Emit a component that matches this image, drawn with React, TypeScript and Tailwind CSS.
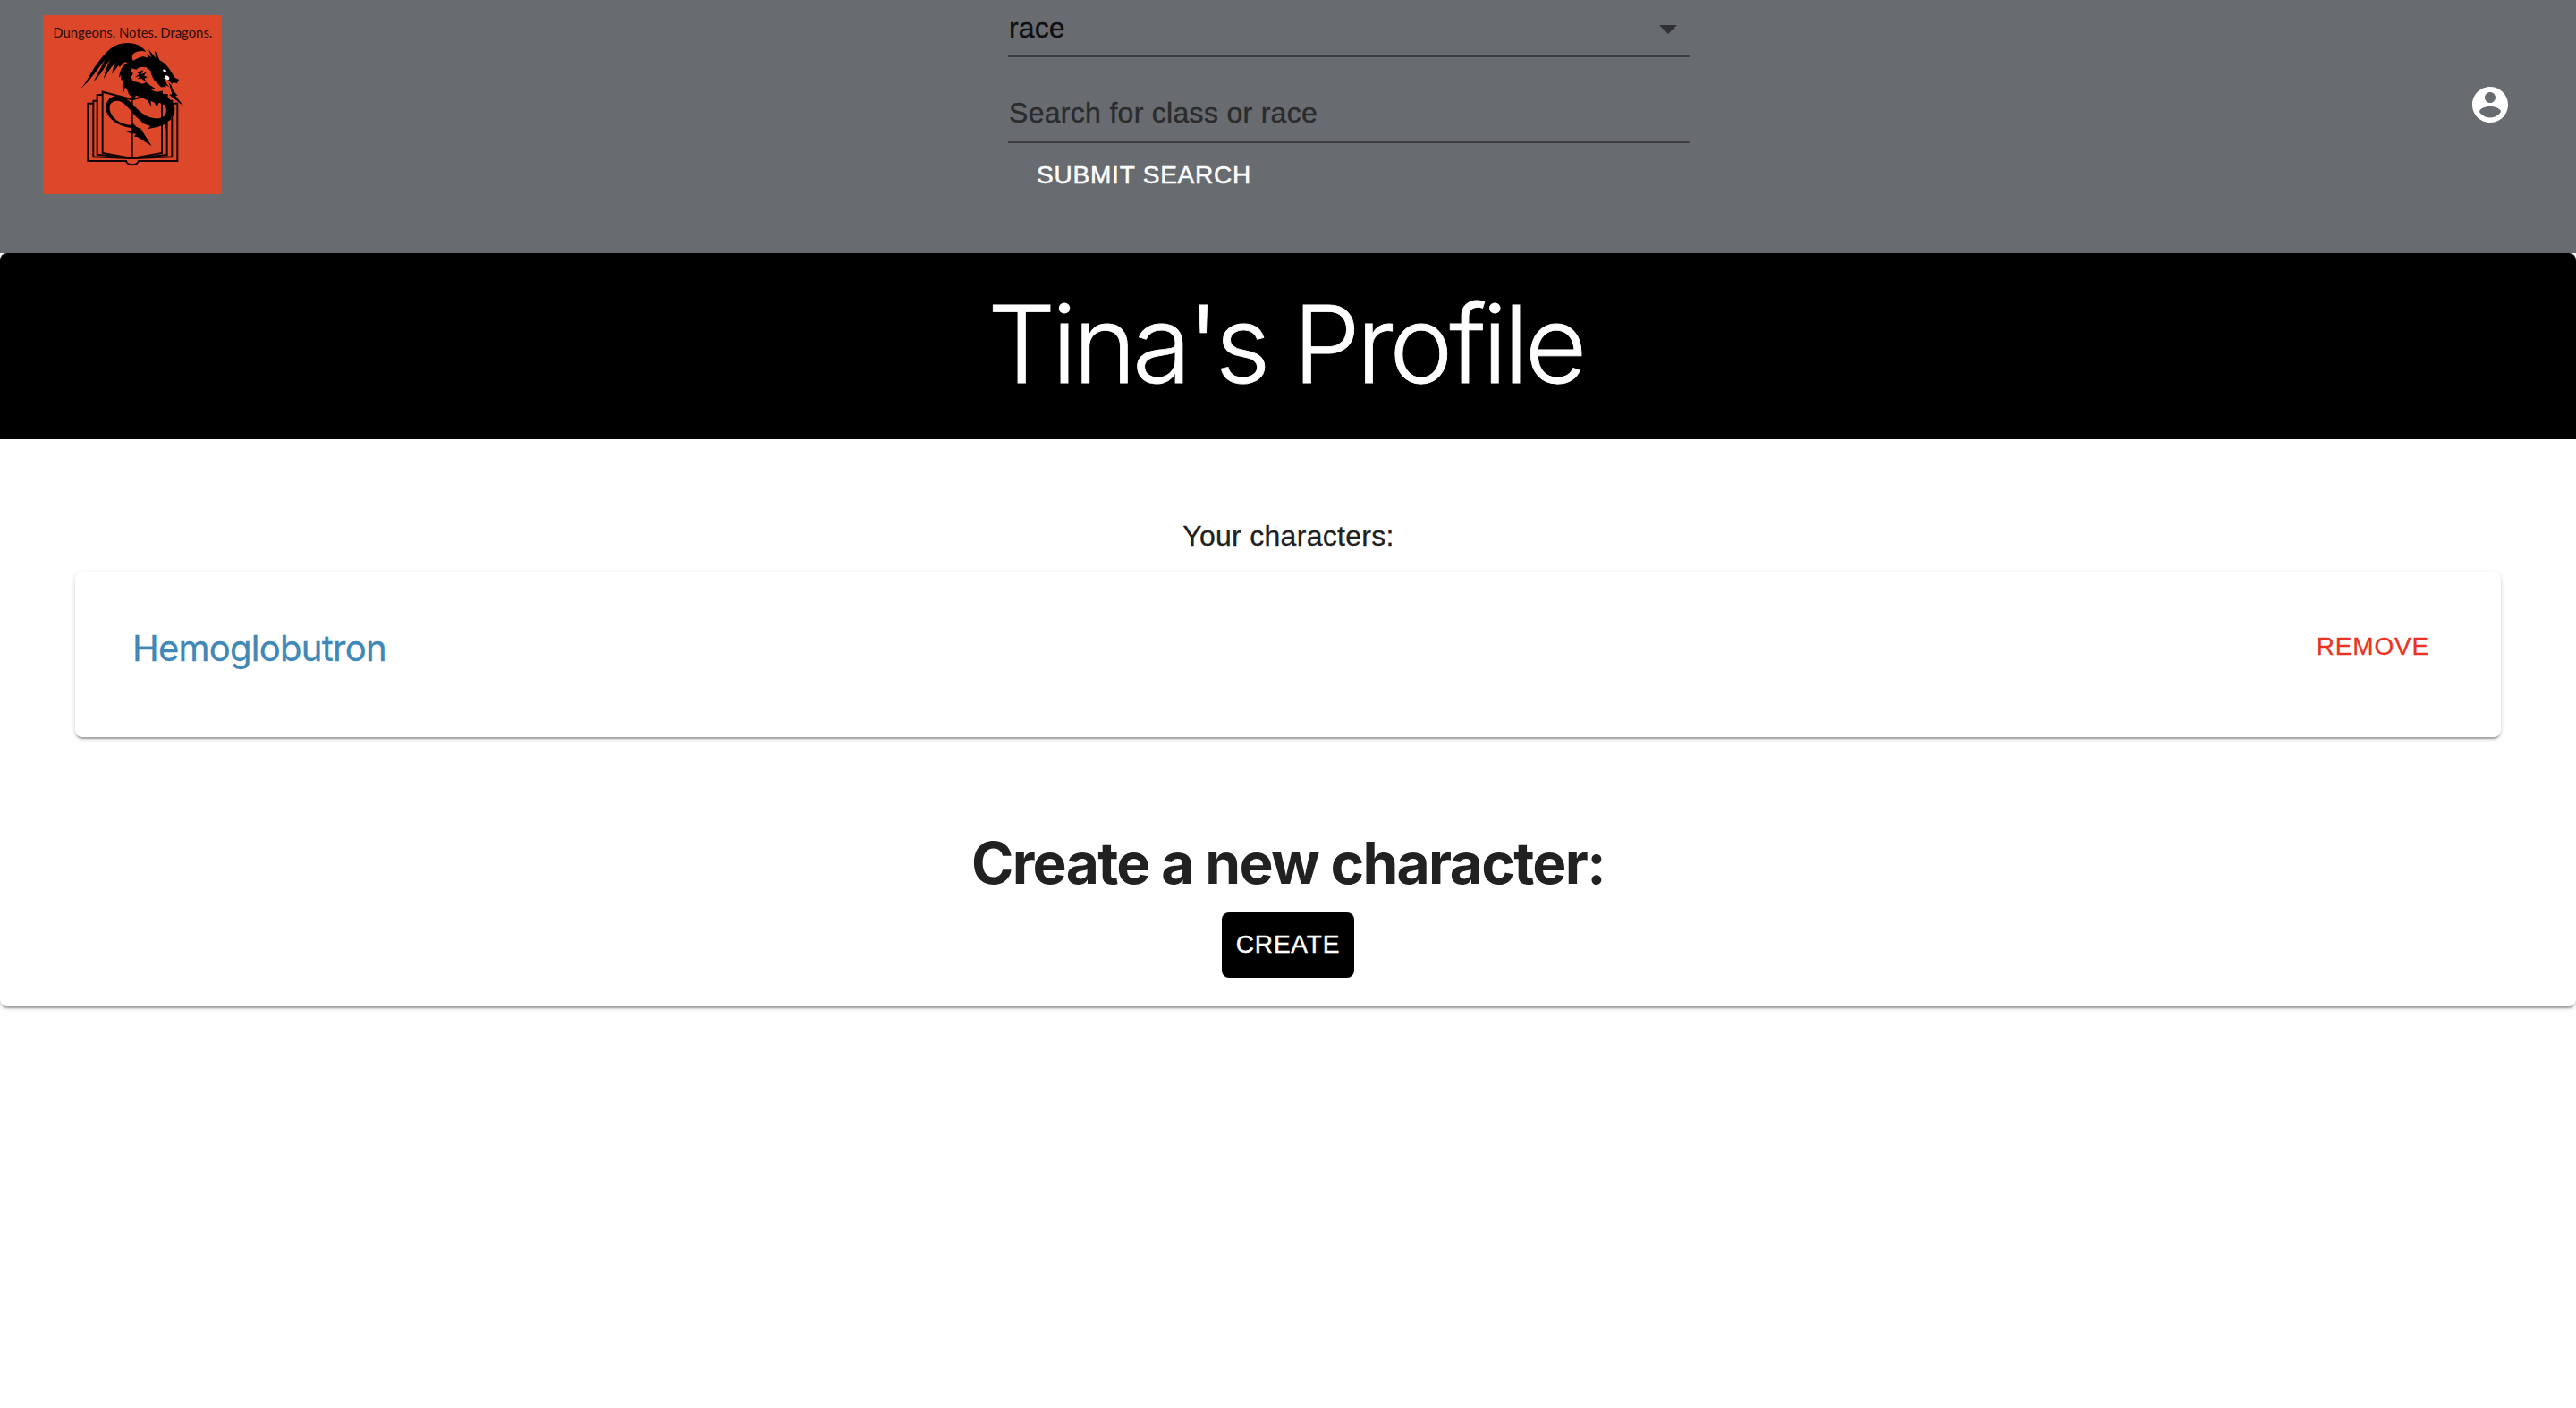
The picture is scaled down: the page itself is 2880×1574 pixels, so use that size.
import React from "react";

function Logo() {
  return (
    <svg viewBox="54 51 600 600" className="block size-[200px] shrink-0" role="img" aria-label="Dungeons. Notes. Dragons.">
      <rect x="54" y="51" width="600" height="600" fill="#dd482b" />
      <text x="88" y="126" fontFamily="Lato, sans-serif" fontSize="45" textLength="534" lengthAdjust="spacingAndGlyphs" fill="#2a0d08">
        Dungeons. Notes. Dragons.
      </text>
      <g fill="none" stroke="#120402" strokeWidth="6" strokeLinejoin="miter">
        <path d="M222 347H205V540H333C338 557 369 557 375 540H505V347H489" />
        <path d="M236 338H223V526L345 531M470 338H487V526L362 531" />
        <path d="M253 318H236V518L352 531M454 318H470V519L354 531" />
        <path d="M353 334L254 308V513L353 531L453 513V308L353 334V531" />
      </g>
      <g fill="#000">
        <path d="M181 297C199 278 205 262 214 247C232 216 252 190 274 169C292 151 317 143 342 144C371 146 389 157 400 174C384 168 366 173 358 180C351 188 352 199 360 207L344 212L328 208L312 224L307 220L286 248C287 232 292 222 300 210C284 220 272 243 258 264C262 240 270 220 279 201C262 221 247 254 224 273C239 245 251 221 262 201C241 224 218 266 181 297Z" />
        <path d="M344 206C360 207 371 191 392 190L407 194L402 180L418 193L408 166L433 194L429 170C436 177 441 190 445 202C465 211 477 228 486 244L497 261L510 267L504 280L493 276L486 281L474 268L456 262L449 270L463 276L467 292L449 292L440 281L428 270L417 249L415 237L400 226L379 224L367 233L353 229L349 240L357 247L350 257L355 272L373 276L388 281L400 276L413 286L432 298L410 298L430 307L451 310L476 329L489 344L496 362L495 391L485 386L482 402L470 409L466 434L461 417L440 425L404 433L415 423L392 415L376 400L363 388L348 370L329 350C312 334 292 335 281 348C273 362 280 382 294 397C308 411 333 420 357 420L352 409L368 426L382 431L419 490L371 459L360 458L366 449L333 443L353 438L350 429C316 425 285 409 270 382C258 355 269 327 294 323C321 318 340 334 359 354C376 372 394 388 415 394C434 400 452 398 462 388C473 376 471 360 460 351L443 344L436 359L428 344L415 338L418 359L405 337L388 328L367 320L357 333L342 315L336 299L329 292L326 310C319 298 320 283 323 271L315 266L317 251L309 260C311 242 317 226 329 216Z" />
        <path d="M370 242L391 235L383 249L401 242L393 254L405 258L395 263L402 276L384 263L371 265L381 255L363 259L376 249Z" />
        <path d="M476 276L484 285L491 304L506 321L498 320L527 357L492 329L478 318L487 315Z" />
        <path d="M448 259L464 266L469 281L478 292L460 282L448 270Z" />
      </g>
      <ellipse cx="462" cy="237" rx="6" ry="4" fill="#fff" transform="rotate(30 462 237)" />
      <ellipse cx="470" cy="260" rx="9" ry="6" fill="#fff" transform="rotate(30 470 260)" />
    </svg>
  );
}

function Header() {
  return (
    <header className="flex h-[283px] items-start bg-[#686b70] pl-12">
      <div className="pt-[17px]">
        <Logo />
      </div>
      <form className="ml-[879px] flex w-[762px] flex-col items-start" onSubmit={(e) => e.preventDefault()}>
        <div className="flex h-16 w-full items-center justify-between border-b-2 border-black/42">
          <span className="pl-px text-[32px] leading-[38px] tracking-[0.1px] text-black/87 [-webkit-text-stroke:0.4px]">race</span>
          <svg viewBox="0 0 24 24" className="mt-[2px] size-12 fill-black/54">
            <path d="M7 10l5 5 5-5z" />
          </svg>
        </div>
        <input
          className="mt-8 h-16 w-full border-b-2 border-black/42 bg-transparent pb-px pl-px text-[32px] leading-[38px] tracking-[0.3px] outline-none [-webkit-text-stroke:0.4px] placeholder:text-[#2a2b2d] placeholder:opacity-100"
          placeholder="Search for class or race"
        />
        <button className="ml-8 mt-[11px] h-[49px] text-[28px] leading-[49px] tracking-[0.8px] text-white [-webkit-text-stroke:0.5px]">SUBMIT SEARCH</button>
      </form>
      <svg viewBox="0 0 24 24" className="ml-[871px] mt-[93px] size-12 fill-white">
        <path d="M12 2C6.48 2 2 6.48 2 12s4.48 10 10 10 10-4.48 10-10S17.52 2 12 2zm0 3c1.66 0 3 1.34 3 3s-1.34 3-3 3-3-1.34-3-3 1.34-3 3-3zm0 14.2c-2.5 0-4.71-1.28-6-3.22.03-1.99 4-3.08 6-3.08 1.99 0 5.97 1.09 6 3.08-1.29 1.94-3.5 3.22-6 3.22z" />
      </svg>
    </header>
  );
}

const cardShadow =
  "shadow-[0_4px_2px_-2px_rgba(0,0,0,0.2),0_2px_2px_0_rgba(0,0,0,0.14),0_2px_6px_0_rgba(0,0,0,0.12)]";

export default function App() {
  return (
    <div className="min-h-[1574px] bg-white font-['Liberation_Sans',Arial,sans-serif] text-[#212121]">
      <Header />
      <main className={`flex h-[842px] flex-col items-center overflow-hidden rounded-lg bg-white ${cardShadow}`}>
        <h1 className="h-[208px] w-full shrink-0 bg-black pr-[6px] text-center font-['Inter',sans-serif] text-[120px] font-light leading-[204px] tracking-[-4.3px] text-white [-webkit-text-stroke:0.8px]">
          Tina's Profile
        </h1>
        <p className="mt-[84px] h-[48px] pl-px text-[32px] leading-[48px] tracking-[0.3px] [-webkit-text-stroke:0.3px]">Your characters:</p>
        <section className={`mt-4 flex h-[185px] w-[2712px] shrink-0 items-start justify-between rounded-lg bg-white pl-16 pr-20 pt-[60px] ${cardShadow}`}>
          <a className="font-['Inter',sans-serif] text-[40px] leading-[52px] tracking-[-0.75px] text-[#4088b8] [-webkit-text-stroke:0.3px]">Hemoglobutron</a>
          <button className="text-[28px] leading-[48px] tracking-[0.8px] text-[#ea3323] [-webkit-text-stroke:0.3px]">REMOVE</button>
        </section>
        <h2 className="mt-[102px] h-[79px] font-['Inter',sans-serif] text-[64px] font-bold leading-[78px] tracking-[-1.65px]">
          Create a new character:
        </h2>
        <button className="mt-[15px] h-[73px] w-[148px] shrink-0 rounded-lg bg-black pb-px text-[28px] tracking-[0.8px] text-white [-webkit-text-stroke:0.4px]">CREATE</button>
      </main>
    </div>
  );
}
